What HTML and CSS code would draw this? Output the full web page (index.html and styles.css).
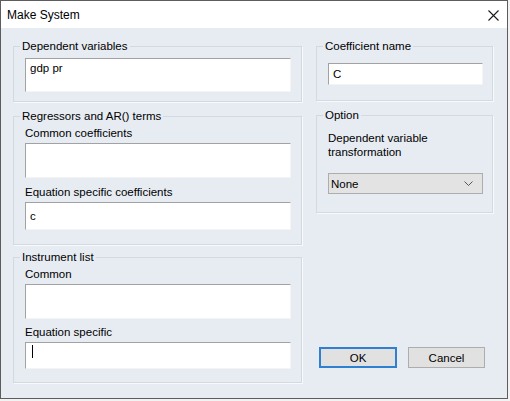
FILE: index.html
```html
<!DOCTYPE html>
<html>
<head>
<meta charset="utf-8">
<link rel="stylesheet" href="styles.css">
</head>
<body>
<div class="window">
  <div class="titlebar">
    <span class="title">Make System</span>
    <svg class="close" width="11" height="11" viewBox="0 0 11 11"><path d="M0.5 0.5 L10.5 10.5 M10.5 0.5 L0.5 10.5" stroke="#1a1a1a" stroke-width="1.1" fill="none"/></svg>
  </div>
  <div class="content">
    <div class="col col-left">
      <fieldset class="group g-dep">
        <legend>Dependent variables</legend>
        <div class="edit edit-dep">gdp pr</div>
      </fieldset>
      <fieldset class="group g-reg">
        <legend>Regressors and AR() terms</legend>
        <div class="field-label">Common coefficients</div>
        <div class="edit edit-tall"></div>
        <div class="field-label next">Equation specific coefficients</div>
        <div class="edit edit-eq">c</div>
      </fieldset>
      <fieldset class="group g-inst">
        <legend>Instrument list</legend>
        <div class="field-label">Common</div>
        <div class="edit edit-tall"></div>
        <div class="field-label next-inst">Equation specific</div>
        <div class="edit edit-inst"><span class="caret"></span></div>
      </fieldset>
    </div>
    <div class="col col-right">
      <fieldset class="group g-coef">
        <legend>Coefficient name</legend>
        <div class="edit edit-single">C</div>
      </fieldset>
      <fieldset class="group g-opt">
        <legend>Option</legend>
        <div class="opt-text">Dependent variable<br>transformation</div>
        <div class="select">
          <span>None</span>
          <svg class="chev" width="9" height="5" viewBox="0 0 9 5"><path d="M0.5 0.5 L4.5 4.5 L8.5 0.5" stroke="#555" stroke-width="1" fill="none"/></svg>
        </div>
      </fieldset>
      <div class="buttons">
        <div class="btn btn-default">OK</div>
        <div class="btn btn-cancel">Cancel</div>
      </div>
    </div>
  </div>
</div>
</body>
</html>
```
FILE: styles.css
```css
html, body {
  margin: 0;
  padding: 0;
  background: #f2f2f2;
}
body {
  font-family: "Liberation Sans", Arial, sans-serif;
  font-size: 11.5px;
  color: #000;
}
.window {
  width: 508px;
  height: 399px;
  box-sizing: border-box;
  border: 1px solid #5d5d5d;
  background: #e7ecf3;
  display: flex;
  flex-direction: column;
}
.titlebar {
  height: 27px;
  flex: none;
  background: #fff;
  display: flex;
  align-items: center;
  justify-content: space-between;
  padding: 0 8px 0 6px;
}
.title {
  font-size: 12px;
  line-height: 14px;
  color: #000;
}
.close {
  display: block;
  margin-top: 1px;
}
.content {
  flex: 1;
  display: flex;
  gap: 14px;
  padding: 11px 0 0 12px;
}
.col {
  display: flex;
  flex-direction: column;
}
.col-left { width: 289px; }
.col-right { width: 177px; }

.group {
  margin: 0;
  min-width: 0;
  border: 1px solid #d3d9e1;
  box-shadow: 1px 1px 0 #f7f9fb;
}
.group legend {
  padding: 0 2px;
  margin-left: -5px;
  line-height: 14px;
}
.g-dep { padding: 5px 10px 9px 11px; }
.g-reg { margin-top: 7px; padding: 3px 10px 14px 11px; }
.g-inst { margin-top: 5px; padding: 3px 10px 13px 11px; }
.g-coef { padding: 10px 9px 15px 11px; }
.g-opt { margin-top: 7px; padding: 9px 9px 18px 11px; }

.field-label {
  line-height: 14px;
  margin-bottom: 3px;
}
.field-label.next { margin-top: 7px; }
.field-label.next-inst { margin-top: 6px; }

.edit {
  box-sizing: border-box;
  background: #fff;
  border: 1px solid;
  border-color: #a2a2a2 #f4f4f4 #f4f4f4 #a2a2a2;
  line-height: 14px;
  padding: 1px 4px 0;
}
.edit-dep { height: 34px; padding-top: 2px; }
.edit-tall { height: 35px; }
.edit-eq { height: 28px; padding-top: 6px; }
.edit-inst { height: 27px; padding-top: 2px; }
.edit-single {
  height: 22px;
  display: flex;
  align-items: center;
  padding: 0 4px;
}
.caret {
  display: block;
  width: 1px;
  height: 13px;
  margin-left: 2px;
  background: #000;
}

.opt-text {
  line-height: 14px;
}
.select {
  margin-top: 14px;
  height: 21px;
  box-sizing: border-box;
  background: #e3e3e3;
  border: 1px solid #adadad;
  display: flex;
  align-items: center;
  justify-content: space-between;
  padding: 0 9px 0 2px;
  line-height: 14px;
}
.chev { display: block; }

.buttons {
  margin-top: auto;
  margin-bottom: 30px;
  padding-left: 3px;
  display: flex;
  gap: 11px;
}
.btn {
  box-sizing: border-box;
  height: 21px;
  background: #e1e1e1;
  border: 1px solid #adadad;
  display: flex;
  align-items: center;
  justify-content: center;
  line-height: 14px;
}
.btn-default {
  width: 78px;
  border: 2px solid #2f80d1;
}
.btn-cancel { width: 77px; }
```
